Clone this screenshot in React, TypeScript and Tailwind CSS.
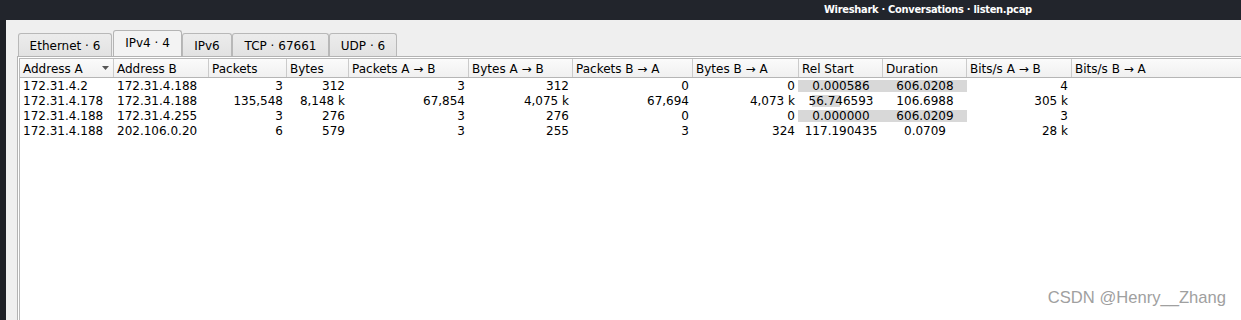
import { type ReactNode } from "react";

type Align = "left" | "right" | "center";

interface Col {
  label: string;
  width: string;
  align: Align;
}

const cols: Col[] = [
  { label: "Address A", width: "w-[94px]", align: "left" },
  { label: "Address B", width: "w-[95px]", align: "left" },
  { label: "Packets", width: "w-[78px]", align: "right" },
  { label: "Bytes", width: "w-[62px]", align: "right" },
  { label: "Packets A → B", width: "w-[120px]", align: "right" },
  { label: "Bytes A → B", width: "w-[104px]", align: "right" },
  { label: "Packets B → A", width: "w-[120px]", align: "right" },
  { label: "Bytes B → A", width: "w-[106px]", align: "right" },
  { label: "Rel Start", width: "w-[84px]", align: "center" },
  { label: "Duration", width: "w-[84px]", align: "center" },
  { label: "Bits/s A → B", width: "w-[105px]", align: "right" },
  { label: "Bits/s B → A", width: "flex-1", align: "right" },
];

interface Row {
  cells: string[];
  bar?: string;
}

const rows: Row[] = [
  {
    cells: ["172.31.4.2", "172.31.4.188", "3", "312", "3", "312", "0", "0", "0.000586", "606.0208", "4", ""],
    bar: "left-[-1px] w-[169px]",
  },
  {
    cells: ["172.31.4.178", "172.31.4.188", "135,548", "8,148 k", "67,854", "4,075 k", "67,694", "4,073 k", "56.746593", "106.6988", "305 k", ""],
    bar: "left-[13px] w-[28px]",
  },
  {
    cells: ["172.31.4.188", "172.31.4.255", "3", "276", "3", "276", "0", "0", "0.000000", "606.0209", "3", ""],
    bar: "left-[-1px] w-[169px]",
  },
  {
    cells: ["172.31.4.188", "202.106.0.20", "6", "579", "3", "255", "3", "324", "117.190435", "0.0709", "28 k", ""],
  },
];

const tabs = [
  { label: "Ethernet · 6", width: "w-[94px]", active: false },
  { label: "IPv4 · 4", width: "w-[69px] ml-px", active: true },
  { label: "IPv6", width: "w-[50px]", active: false },
  { label: "TCP · 67661", width: "w-[97px]", active: false },
  { label: "UDP · 6", width: "w-[68px]", active: false },
];

function alignClass(a: Align) {
  if (a === "right") return "justify-end pr-[4px]";
  if (a === "center") return "justify-center";
  return "justify-start pl-[3px]";
}

function Cell({ col, children }: { col: Col; children: ReactNode }) {
  return (
    <div className={`${col.width} shrink-0 flex items-center whitespace-nowrap ${alignClass(col.align)}`}>
      {children}
    </div>
  );
}

function TableRow({ row }: { row: Row }) {
  return (
    <div className="flex h-[15px] leading-none">
      {cols.slice(0, 8).map((c, i) => (
        <Cell key={i} col={c}>
          {row.cells[i]}
        </Cell>
      ))}
      <div className="relative flex w-[168px] shrink-0">
        {row.bar && <div className={`absolute top-[2px] h-[12px] bg-[#d8d8d8] ${row.bar}`} />}
        <div className="relative flex">
          <Cell col={cols[8]}>{row.cells[8]}</Cell>
          <Cell col={cols[9]}>{row.cells[9]}</Cell>
        </div>
      </div>
      <Cell col={cols[10]}>{row.cells[10]}</Cell>
      <Cell col={cols[11]}>{row.cells[11]}</Cell>
    </div>
  );
}

export default function App() {
  return (
    <div className="relative w-[1241px] h-[320px] overflow-hidden flex flex-col bg-[#efefef] font-['DejaVu_Sans',sans-serif] text-[12px] text-black">
      <div className="h-[20px] shrink-0 bg-[#22252c] flex items-center pl-[824px]">
        <span className="font-bold text-[11px] text-white tracking-[-0.3px] font-['DejaVu_Sans_Condensed','DejaVu_Sans',sans-serif]">
          Wireshark · Conversations · listen.pcap
        </span>
      </div>
      <div className="flex flex-1 min-h-0">
        <div className="w-[6px] shrink-0 bg-[#1e2026]" />
        <div className="flex-1 flex flex-col pl-[11px] pt-[10px] min-w-0">
          <div className="flex items-end h-[26px] pl-px">
            {tabs.map((t, i) => (
              <div
                key={i}
                className={
                  t.active
                    ? `${t.width} h-[26px] border border-b-0 border-[#b4b4b4] rounded-t-[3px] bg-[#f3f3f3] flex items-center justify-center pb-[2px]`
                    : `${t.width} h-[23px] border border-b-0 border-[#b8b8b8] rounded-t-[3px] bg-gradient-to-b from-[#ececec] to-[#e2e2e2] flex items-center justify-center pt-px`
                }
              >
                {t.label}
              </div>
            ))}
          </div>
          <div className="flex-1 border border-r-0 border-b-0 border-[#b3b3b3] bg-white p-px pr-0 pb-0 min-h-0">
            <div className="h-full border-l border-t border-[#b8b8b8] bg-white">
              <div className="flex h-[19px] border-b border-[#b5b5b5] bg-gradient-to-b from-[#fbfbfb] to-[#f0f0f0]">
                {cols.map((c, i) => (
                  <div
                    key={i}
                    className={`${c.width} shrink-0 flex items-center pl-[3px] pt-px whitespace-nowrap ${i < cols.length - 1 ? "border-r border-[#cbcbcb]" : ""}`}
                  >
                    <span className="flex-1">{c.label}</span>
                    {i === 0 && (
                      <svg width="7" height="4" viewBox="0 0 7 4" className="mr-[4px] mb-px">
                        <path d="M0 0H7L3.5 4Z" fill="#555" />
                      </svg>
                    )}
                  </div>
                ))}
              </div>
              {rows.map((r, i) => (
                <TableRow key={i} row={r} />
              ))}
            </div>
          </div>
        </div>
      </div>
      <span className="absolute right-[15px] bottom-[9px] text-[16.6px] text-[#a0a0a0] font-['Liberation_Sans_Narrow','Liberation_Sans',sans-serif]">
        CSDN @Henry__Zhang
      </span>
    </div>
  );
}
